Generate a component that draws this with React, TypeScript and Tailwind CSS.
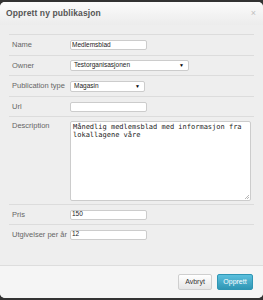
import React from "react";

const Row = ({ label, children, h = "h-[20px]", top = false }: { label: string; children: React.ReactNode; h?: string; top?: boolean }) => (
  <div className={`flex border-t border-[#dcdcdc] ${h} ${top ? "items-start pt-[4px]" : "items-center"}`}>
    <div className={`w-[61px] pl-[3px] text-[7.5px] text-[#666] ${top ? "leading-[10px]" : ""}`}>{label}</div>
    {children}
  </div>
);

const Input = ({ value, w = "w-[77px]" }: { value: string; w?: string }) => (
  <div className={`${w} h-[10px] bg-white border border-[#cccccc] rounded-[2px] flex items-center pl-[1px] text-[6.5px] text-[#222] leading-none`}>
    {value}
  </div>
);

const Select = ({ value, w }: { value: string; w: string }) => (
  <div className={`${w} h-[11px] bg-white border border-[#cccccc] rounded-[2px] flex items-center justify-between pl-[3px] pr-[4px] text-[6.5px] text-[#222] leading-none`}>
    <span>{value}</span>
    <span className="text-[5px] text-black">▼</span>
  </div>
);

export default function App() {
  return (
    <div className="w-[263px] h-[300px] bg-[#333333] pt-[2px]" style={{ fontFamily: '"Liberation Sans", Arial, sans-serif' }}>
      <div className="h-[296px] bg-[#eeeeee] rounded-[5px] overflow-hidden flex flex-col">
        <div className="h-[23px] shrink-0 flex items-center justify-between pl-[6px] pr-[7px] bg-gradient-to-b from-[#fbfbfb] to-[#ececec]">
          <span className="text-[8.5px] font-bold text-[#555] tracking-[0.1px]">Opprett ny publikasjon</span>
          <span className="text-[9px] text-[#c0c0c0] leading-none">×</span>
        </div>
        <div className="flex-1 px-[9px] pt-[9px]">
          <Row label="Name" h="h-[21px]"><Input value="Medlemsblad" /></Row>
          <Row label="Owner"><Select value="Testorganisasjonen" w="w-[119px]" /></Row>
          <Row label="Publication type" h="h-[21px]"><Select value="Magasin" w="w-[75px]" /></Row>
          <Row label="Url"><Input value="" /></Row>
          <Row label="Description" h="h-[88px]" top>
            <div className="relative w-[181px] h-[80px] bg-white border border-[#cccccc] rounded-[2px] px-[2px] pt-[1px] text-[7px] leading-[8px] text-[#222]" style={{ fontFamily: '"DejaVu Sans Mono", "Liberation Mono", monospace' }}>
              Månedlig medlemsblad med informasjon fra lokallagene våre
              <svg className="absolute right-[1px] bottom-[1px]" width="5" height="5" viewBox="0 0 5 5">
                <path d="M1 5 L5 1 M3 5 L5 3" stroke="#999" strokeWidth="0.7" />
              </svg>
            </div>
          </Row>
          <Row label="Pris"><Input value="150" /></Row>
          <Row label="Utgivelser per år"><Input value="12" /></Row>
        </div>
        <div className="h-[33px] shrink-0 bg-[#f5f5f5] border-t border-[#dddddd] flex items-center justify-end gap-[5px] pr-[10px]">
          <div className="w-[34px] h-[16px] rounded-[2px] border border-[#cfcfcf] bg-gradient-to-b from-white to-[#e6e6e6] flex items-center justify-center text-[7px] text-[#333]">Avbryt</div>
          <div className="w-[36px] h-[16px] rounded-[2px] border border-[#2f96b4] bg-gradient-to-b from-[#5bc0de] to-[#2f96b4] flex items-center justify-center text-[7px] text-white">Opprett</div>
        </div>
      </div>
    </div>
  );
}
